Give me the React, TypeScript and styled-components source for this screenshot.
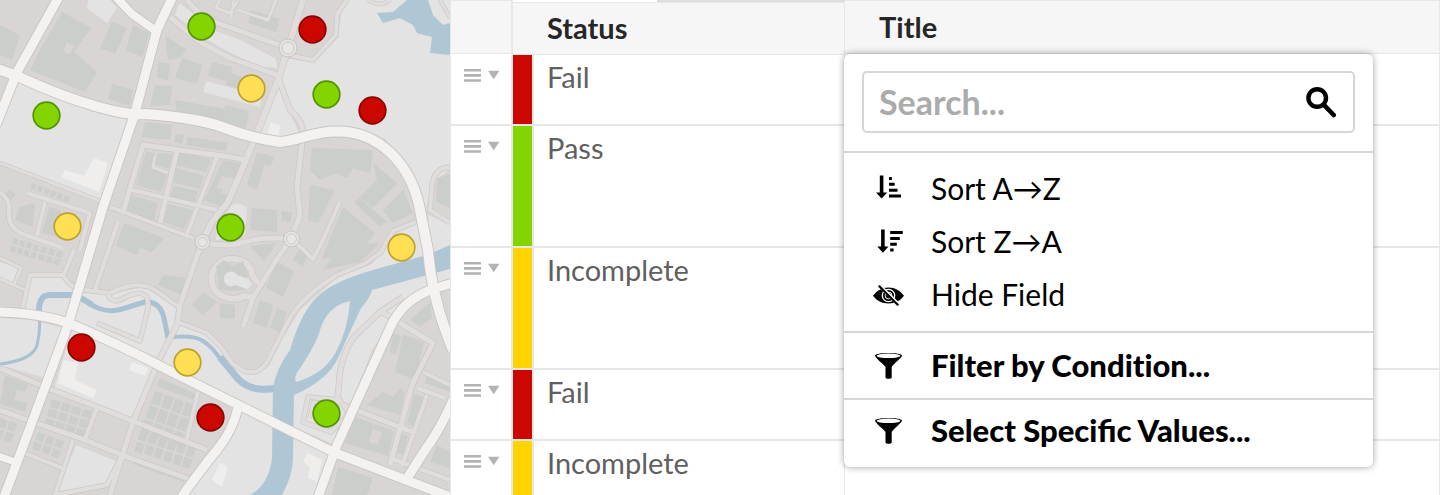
import React from "react";
import styled, { createGlobalStyle } from "styled-components";

const GlobalStyle = createGlobalStyle`
  * { box-sizing: border-box; }
  body { margin: 0; background: #fff; font-family: Lato, "Liberation Sans", sans-serif; }
`;

const RULE = "#e7e7e7";
const COLORS = {
  red: { fill: "#cc0700", ring: "#8a0400" },
  green: { fill: "#84d500", ring: "#549400" },
  yellow: { fill: "#ffe055", ring: "#bfa02c" },
};
type Tone = keyof typeof COLORS;

/* ---------- Page ---------- */

const Page = styled.main`
  display: flex;
  height: 100vh;
  overflow: hidden;
`;

const MapPane = styled.section`
  flex: 0 0 31.25%;
  min-width: 0;
  background: #d8d6d5;
  svg { display: block; width: 100%; height: 100%; }
`;

const TablePane = styled.section`
  flex: 1 1 0;
  min-width: 0;
`;

/* ---------- Table ---------- */

const Grid = styled.table`
  width: 100%;
  table-layout: fixed;
  border-collapse: separate;
  border-spacing: 0;
  border-right: 1px solid ${RULE};
`;

const Col = styled.col<{ $w?: number }>`
  width: ${(p) => (p.$w ? `${p.$w}px` : "auto")};
`;

const HeadCell = styled.th`
  position: relative;
  height: 55px;
  padding: 0;
  vertical-align: top;
  text-align: left;
`;

const HeadBox = styled.div<{ $tall?: boolean; $edge?: "left" | "right"; $pad?: number }>`
  display: flex;
  align-items: center;
  height: ${(p) => (p.$tall ? 53 : 54)}px;
  padding-left: ${(p) => p.$pad ?? 0}px;
  padding-bottom: ${(p) => (p.$tall ? 2 : 0)}px;
  background: #f6f6f6;
  border-top: 1px solid ${RULE};
  border-bottom: 1px solid ${RULE};
  ${(p) => p.$edge === "left" && `border-left: 1px solid ${RULE};`}
  ${(p) => p.$edge === "right" && `border-left: 1px solid ${RULE}; border-right: 2px solid ${RULE};`}
  color: #262626;
  font-size: 29px;
  line-height: 36px;
  font-weight: 700;
`;

const TabStrip = styled.div`
  display: flex;
  height: 2px;
  background: #dedede;
  &::before { content: ""; width: 144px; background: #fff; }
`;

const Row = styled.tr<{ $h: number }>`
  height: ${(p) => p.$h}px;
`;

const Cell = styled.td`
  padding: 0;
  vertical-align: top;
  border-bottom: 2px solid ${RULE};
`;

const HandleCell = styled(Cell)`
  border-left: 1px solid ${RULE};
  border-right: 2px solid ${RULE};
`;

const SwatchCell = styled(Cell)<{ $color: string }>`
  background: ${(p) => p.$color};
  background-clip: padding-box;
  border-right: 2px solid ${RULE};
`;

const StatusCell = styled(Cell)`
  padding: 3px 0 0 13px;
  color: #606060;
  font-size: 29px;
  line-height: 38px;
`;

const TitleCell = styled(Cell)`
  border-left: 1px solid ${RULE};
`;

const RowButton = styled.button`
  display: block;
  margin: 14px 0 0 13px;
  padding: 0;
  border: 0;
  background: none;
  svg { display: block; }
`;

/* ---------- Column menu ---------- */

const Menu = styled.div`
  position: absolute;
  top: 54px;
  left: 0;
  z-index: 2;
  width: 529px;
  padding-bottom: 5px;
  background: #fff;
  border-radius: 6px;
  box-shadow: 0 0 7px rgba(0, 0, 0, 0.38);
  font-weight: 400;
`;

const SearchArea = styled.div`
  padding: 17px 18px 18px;
`;

const SearchBox = styled.label`
  display: flex;
  align-items: center;
  height: 62px;
  padding: 0 16px 0 15px;
  border: 2px solid #d6d6d6;
  border-radius: 5px;
`;

const SearchInput = styled.input`
  flex: 1;
  min-width: 0;
  padding: 0;
  border: 0;
  outline: 0;
  background: none;
  font-family: inherit;
  font-size: 34px;
  line-height: 44px;
  font-weight: 700;
  color: #222;
  &::placeholder { color: #ababab; opacity: 1; }
`;

const MenuGroup = styled.div<{ $padded?: boolean }>`
  border-top: 2px solid #d6d6d6;
  padding: ${(p) => (p.$padded ? "9px 0 10px" : "0")};
`;

const MenuItem = styled.button<{ $strong?: boolean; $plain?: boolean; $h?: number }>`
  display: flex;
  align-items: center;
  gap: 27px;
  width: 100%;
  height: ${(p) => p.$h ?? 53}px;
  padding: 0 0 2px 28px;
  border: 0;
  background: none;
  color: #000;
  font-family: inherit;
  font-size: ${(p) => (p.$strong ? 31 : 30)}px;
  line-height: 40px;
  font-weight: ${(p) => (p.$strong ? 900 : 400)};
  font-variant-ligatures: ${(p) => (p.$plain ? "none" : "normal")};
  text-align: left;
  svg { flex: none; display: block; }
`;

/* ---------- Icons ---------- */

const RowHandleIcon = () => (
  <svg width="37" height="13" viewBox="0 0 37 13" fill="#b3b3b3" aria-hidden="true">
    <path d="M0 0h17v2.600H0zM0 5.100h17v2.600H0zM0 10.200h17v2.600H0zM24 1.800h11.400L29.700 10.200z" />
  </svg>
);

const SearchIcon = () => (
  <svg width="32" height="32" viewBox="0 0 32 32" fill="none" stroke="#000" strokeLinecap="round" aria-hidden="true">
    <circle cx="12.200" cy="12" r="8.800" strokeWidth="4.400" />
    <path d="M19.200 19.200l9.500 9.800" strokeWidth="4.600" />
  </svg>
);

const SortAscIcon = () => (
  <svg width="32" height="32" viewBox="0 0 32 32" aria-hidden="true">
    <path d="M7.800 3.500h3.600v17h3.800L9.600 26.500 4 20.500h3.800zM17 5h2.900v3H17zM17 10.800h5.700v3H17zM17 16.700h8.500v3H17zM17 22.500h12v3H17z" />
  </svg>
);

const SortDescIcon = () => (
  <svg width="32" height="32" viewBox="0 0 32 32" aria-hidden="true">
    <path d="M9.100 4.500h3.600v17h3.800L10.900 27.700 5.300 21.500h3.800zM18.200 6h12.600v3H18.200zM18.200 11.900h9.600v3h-9.600zM18.200 17.800h6.600v3h-6.600zM18.200 23.600h3.400v3h-3.400z" />
  </svg>
);

const HiddenIcon = () => (
  <svg width="32" height="32" viewBox="0 -1 32 32" aria-hidden="true">
    <path d="M1 16.800C5 11.500 10 8.500 16.500 8.500S28 11.500 32 16.800c-4 5.200-9 7.700-15.500 7.700S5 22 1 16.800z" />
    <circle cx="16.500" cy="16.500" r="6.200" fill="none" stroke="#fff" strokeWidth="1.300" />
    <circle cx="16.500" cy="16.500" r="3.400" fill="none" stroke="#fff" strokeWidth="1" />
    <path d="M8.500 7.500l18 18" stroke="#fff" strokeWidth="3.600" />
    <path d="M7.300 7.300l18.400 18.400" stroke="#000" strokeWidth="2.200" strokeLinecap="round" />
  </svg>
);

const FunnelIcon = () => (
  <svg width="32" height="32" viewBox="0 -1 32 32" aria-hidden="true">
    <path d="M3 5.500C3 2 30 2 30 5.500c0 2-8 8-10.300 11.500V27.500c0 1.700-6.200 1.700-6.200 0V17C11 13.500 3 8 3 5.500z" />
    <ellipse cx="16.500" cy="5.800" rx="11.900" ry="2.300" fill="#fff" />
  </svg>
);

/* ---------- Map ---------- */

const LAND = [
  "M18 83L60 98 128 117 103 200 0 161V128z",
  "M345 0L341 15 338 38 316 60 289 59 279 82 295 115 303 134 340 127 385 139 412 170 425 215 431 185 450 168V0z",
  "M278 85L258 137 280 143 301 136 288 110z",
  "M0 262L18 268 12 284 0 280z",
  "M30 278H62L82 292 110 295 144 287 178 308 176 326 158 358 68 321 22 313z",
  "M0 318L33 320 63 328 46 378 0 365z",
  "M72 330L156 368 135 420 54 388z",
  "M181 324L207 334 237 367 255 374 269 366 283 338 300 310 338 277 372 264 392 235 420 222 432 285 400 308 372 350 335 445 233 400 160 362z",
  "M428 215L450 224V284L434 288z",
  "M236 408L334 455 318 495H184L217 450z",
  "M76 445L118 462 105 484 57 492z",
  "M180 3L213 30 240 40 275 58 278 68 260 67 225 50 200 35 175 15z",
  "M88 0H110L117 8 107 23 87 8z",
  "M206 81L262 96 260 107 203 92z",
  "M232 205L237 203 247 207 245 235 216 240 218 225z",
];

const WHITE_BUILDINGS = [
  "M94 158L108 163 99 192 61 177 65 170 84 176z",
  "M63 360L78 363 75 380 97 390 93 398 58 383z",
  "M132 362L148 368 145 376 129 370z",
  "M220 463L228 467 222 487 212 480z",
  "M307 453L322 460 317 482 308 478 310 467 303 462z",
  "M270 123l10 2-1 11-11-2z",
];

const BUILDINGS = [
  "M0 25L20 35 12 60 0 55z",
  "M62 12L91 28 74 52 97 72 85 92 30 70 40 50z",
  "M112 22L127 28 115 54 100 48z",
  "M133 25L150 33 142 57 126 50z",
  "M112 84L133 90 130 106 108 99z",
  "M165 36L187 50 180 58 168 60z",
  "M158 62L170 64 168 80 157 78z",
  "M182 58L202 65 197 84 175 78z",
  "M212 62L232 67 230 82 208 76z",
  "M155 85L172 86 170 105 150 106z",
  "M175 100L232 110 230 122 177 112z",
  "M145 122L172 125 170 140 142 137z",
  "M176 134l8 1-2 9-8-2zM188 137l40 6-2 8-40-6z",
  "M228 72l18 7-3 11-17-5z",
  "M225 105l24 6-3 17-23-5z",
  "M252 10l28 9-4 13-28-9z",
  "M312 148L373 150 370 173 353 168 347 178 337 173 320 180 310 170z",
  "M257 152L275 157 270 166 264 165 257 190 247 185z",
  "M310 185L335 190 318 223 308 220z",
  "M373 163L397 183 373 208 360 197 377 180z",
  "M252 208L277 210 277 232 250 230z",
  "M282 211l10 1-1 10-10-1z",
  "M343 207L375 233 353 262 322 258z",
  "M354 202L360 198 387 222 380 227z",
  "M403 190L413 213 393 223 383 210z",
  "M250 246L277 243 264 261z",
  "M277 262L294 271 283 297 266 288z",
  "M260 300L273 305 267 328 253 323z",
  "M277 308L287 312 280 332 270 328z",
  "M220 303l15 2v14l-15-1z",
  "M345 245L380 243 360 262 322 270z",
  "M299 250l9 6-6 10-9-6z",
  "M124 223L164 238 152 252 140 248 137 255 116 246z",
  "M163 275L185 278 182 295 158 285z",
  "M203 292L217 302 203 315 192 305z",
  "M20 207L35 203 33 227 15 220z",
  "M49 207l12 4-1 12 12 4-4 12-26-6z",
  "M9 190l7 4-5 6-6-4z",
  "M5 375L28 384 25 392 17 390 14 400 27 403 25 412 0 404z",
  "M160 378L196 394 194 400 157 386z",
  "M135 458L186 476 184 482 133 464z",
  "M403 335L424 342 415 380 395 372z",
  "M393 333L401 336 396 354 390 352z",
  "M383 392L393 397 400 388 405 392 400 415 367 405z",
  "M354 417L374 424 369 442 377 445 382 432 373 430 375 424 394 431 388 456 345 443z",
  "M338 467L373 478 367 495H332z",
  "M430 302L432 318 420 327 410 320z",
  "M437 445L450 452V468L430 462z",
  "M427 376l23 9v7l-25-9z",
  "M414 394l10 3-8 30-9-3z",
  "M399 433l9 3-5 19-9-3z",
  "M437 178l13-4v34l-14-6z",
  "M146 152L155 153 150 168 167 174 162 192 136 185z",
  "M158 153L173 154 169 169 155 164z",
  "M180 152L211 159 206 172 176 165z",
  "M176 168L204 176 200 189 172 182z",
  "M174 186L198 191 195 203 170 197z",
  "M223 160L243 164 238 180 228 177 221 193 230 195 224 207 204 201z",
  "M131 195L158 203 154 222 125 212z",
  "M168 204L193 210 184 229 163 222z",
];

const COURTS = [
  "M66 42l8 4-4 8-6-2z",
  "M186 88l10 2-1 4-10-2z",
  "M222 176l7 2-5 12-7-2z",
];

const BLOCK_GRIDS = [
  { x: 52, y: 399, angle: 17, cols: 4, rows: 3, w: 9, h: 8, gap: 2 },
  { x: 38, y: 432, angle: 20, cols: 3, rows: 2, w: 8, h: 8, gap: 2 },
  { x: 0, y: 418, angle: 18, cols: 2, rows: 2, w: 8, h: 9, gap: 2 },
  { x: 155, y: 391, angle: 20, cols: 4, rows: 3, w: 9, h: 13, gap: 2 },
  { x: 141, y: 430, angle: 18, cols: 6, rows: 2, w: 8, h: 10, gap: 2 },
  { x: 32, y: 183, angle: 20, cols: 6, rows: 1, w: 5, h: 6, gap: 2 },
  { x: 14, y: 238, angle: 17, cols: 4, rows: 2, w: 5, h: 6, gap: 2 },
  { x: 42, y: 246, angle: 17, cols: 3, rows: 2, w: 6, h: 6, gap: 2 },
];

type Road = { d: string; w: number };

const LANES: Road[] = [
  { d: "M123 212L143 145 230 157 247 160", w: 5 },
  { d: "M132 190L217 210", w: 4 },
  { d: "M177 151L160 223", w: 5 },
  { d: "M217 157L187 234", w: 4 },
  { d: "M110 207L193 238", w: 4 },
  { d: "M155 157l-2 10 15 6", w: 3 },
  { d: "M0 163L100 201", w: 3 },
  { d: "M0 192Q11 200 9 212T20 233L63 248", w: 4 },
  { d: "M27 193L90 213 80 250", w: 4 },
  { d: "M45 202L37 236", w: 4 },
  { d: "M118 222L95 290", w: 4 },
  { d: "M202 242L212 222 228 202 243 167 257 133 278 80 288 48 303 0", w: 6 },
  { d: "M170 17L200 42 230 58 277 75", w: 5 },
  { d: "M187 0L200 15 220 24 288 48", w: 5 },
  { d: "M220 0l-4 8 14 5 8-12M234 0l-3 17M238 10l30 10 8-20", w: 3 },
  { d: "M288 55L313 60 336 35 337 14 347 0", w: 4 },
  { d: "M278 77L290 110Q304 122 303 135L300 160 297 187 300 215 291 239", w: 5 },
  { d: "M202 242Q225 248 245 242T291 239", w: 5 },
  { d: "M291 239L275 262 253 298 243 327", w: 5 },
  { d: "M293 240L313 259 322 242 340 202", w: 4 },
  { d: "M426 218L393 231 381 252 366 263 337 275Q300 298 289 320L267 362Q254 382 232 363L220 346 207 333 178 322", w: 4 },
  { d: "M202 242L180 305 177 325 160 358 133 422 110 495", w: 5 },
  { d: "M22 312L30 275 63 275Q72 290 85 290L110 293Q140 278 158 292L180 308", w: 4 },
  { d: "M64 274L74 250", w: 4 },
  { d: "M108 295Q112 304 122 299 150 284 148 308L140 341 97 323", w: 4 },
  { d: "M0 258L21 268 14 285 0 279", w: 3 },
  { d: "M14 285l11 5", w: 3 },
  { d: "M0 368L47 388 100 408 135 422 207 450", w: 5 },
  { d: "M0 410L33 422 80 438 130 458 192 480", w: 5 },
  { d: "M97 408L84 442", w: 4 },
  { d: "M73 440L55 495 107 485 121 457", w: 4 },
  { d: "M22 452l40 16M198 392L186 443", w: 4 },
  { d: "M337 405L340 372Q345 345 358 333L380 312 403 297", w: 5 },
  { d: "M382 312L433 343 412 385 390 465", w: 5 },
  { d: "M343 405L387 422 415 433", w: 5 },
  { d: "M423 372L450 385M417 388L445 398M427 395L402 466M390 458L450 480", w: 4 },
  { d: "M303 422L308 397 340 400 349 414 331 432z", w: 4 },
  { d: "M310 418L313 402 335 405", w: 3 },
  { d: "M450 167Q433 168 432 187L430 210 450 223", w: 4 },
  { d: "M368 0q12 8 22 0M440 0l10 18", w: 3 },
  { d: "M254 297L244 296Q236 301 224 297A21 20 0 1 1 251 269Q252 279 259 283", w: 6 },
];

const STREETS: Road[] = [
  { d: "M115 -4L132 14 156 31", w: 8 },
  { d: "M60 -5L17 72 -4 125", w: 9 },
  { d: "M-2 456L15 462", w: 7 },
  { d: "M238 408Q232 432 217 450T180 499", w: 9 },
  { d: "M453 400Q440 430 425 450L406 480", w: 9 },
  { d: "M453 283L433 289Q402 300 390 328L337 445 317 500", w: 9 },
  { d: "M173 -4L157 30 135 113 103 207 68 325 47 382 3 500", w: 9 },
  { d: "M-2 69L17 76Q60 96 95 106T145 114Q200 118 225 128T280 142C300 140 315 131 337 131.500 380 131 410 165 419 205L428 250Q432 300 453 350", w: 10 },
  { d: "M-2 312Q40 313 68 323 110 340 170 371L333 452 453 498", w: 9 },
];

const MARKERS: { x: number; y: number; tone: Tone }[] = [
  { x: 201.500, y: 26.500, tone: "green" },
  { x: 312.500, y: 29.500, tone: "red" },
  { x: 251.500, y: 88.500, tone: "yellow" },
  { x: 326.500, y: 94.500, tone: "green" },
  { x: 372.500, y: 110.500, tone: "red" },
  { x: 46.500, y: 115.500, tone: "green" },
  { x: 67.500, y: 226.500, tone: "yellow" },
  { x: 230.500, y: 227.500, tone: "green" },
  { x: 401.500, y: 247.500, tone: "yellow" },
  { x: 81.500, y: 347.500, tone: "red" },
  { x: 187.500, y: 362.500, tone: "yellow" },
  { x: 210.500, y: 417.500, tone: "red" },
  { x: 326.500, y: 413.500, tone: "green" },
];

const Roads = ({ list, fill, edge, rim }: { list: Road[]; fill: string; edge: string; rim: number }) => (
  <g fill="none" strokeLinejoin="round">
    {list.map((r) => (
      <path key={`e${r.d}`} d={r.d} stroke={edge} strokeWidth={r.w + rim} />
    ))}
    {list.map((r) => (
      <path key={r.d} d={r.d} stroke={fill} strokeWidth={r.w} />
    ))}
  </g>
);

const CityMap = () => (
  <svg viewBox="0 0 450 495" preserveAspectRatio="xMinYMin slice" role="img" aria-label="City map with status markers">
    <path fill="#d8d5d4" d="M0 0h450v495H0z" />
    <g fill="#e2e3e2">{LAND.map((d) => <path key={d} d={d} />)}</g>
    <g fill="#cccecb">
      {BUILDINGS.map((d) => <path key={d} d={d} />)}
      {BLOCK_GRIDS.map((b) => (
        <g key={`${b.x}-${b.y}`} transform={`translate(${b.x} ${b.y}) rotate(${b.angle})`}>
          {Array.from({ length: b.cols * b.rows }, (_, i) => (
            <rect
              key={i}
              x={(i % b.cols) * (b.w + b.gap)}
              y={Math.floor(i / b.cols) * (b.h + b.gap)}
              width={b.w}
              height={b.h}
            />
          ))}
        </g>
      ))}
    </g>
    <g fill="#d8d5d4">{COURTS.map((d) => <path key={d} d={d} />)}</g>
    <path
      fill="#afc6d5"
      d="M377 13L393 12 407 0H428L433 15 443 25 450 23V55L430 53 432 37 417 33 413 25 400 18 383 23z"
    />
    <g fill="none" stroke="#a9c1d2" strokeLinejoin="round">
      <path strokeWidth="3" d="M0 364Q33 360 37 345T39 312" />
      <path strokeWidth="6" d="M39 314Q38 295 50 295H73Q84 299 92 305" />
      <path strokeWidth="5" d="M90 304Q106 314 122 309T145 302Q160 301 164 318L168 338" />
      <path strokeWidth="4" d="M168 338Q192 334 203 341T222 362" />
      <path strokeWidth="7" d="M220 357L238 379Q252 393 277 388" />
    </g>
    <path
      fill="#afc6d5"
      fillRule="evenodd"
      d="M450 245L427 255 380 268Q335 280 318 296T290 350Q275 370 273 390L272 458Q269 485 250 495H282Q293 475 293 457L294 395Q328 380 338 358T361 308Q370 298 372 290L450 269zM350 301Q348 330 336 352T296 382Q293 376 301 367 317 342 320 330 327 306 350 301z"
    />
    <Roads list={LANES} fill="#e0dddc" edge="#cbc9c7" rim={1.4} />
    <g fill="#e4e3e2" stroke="#c8c6c4">
      <circle cx="202.500" cy="242" r="7.500" />
      <circle cx="288" cy="48" r="9" />
      <circle cx="291.500" cy="239" r="8" />
    </g>
    <g fill="#e6e6e5" stroke="#cdcbca">
      <circle cx="202.500" cy="242" r="4.500" />
      <circle cx="288" cy="48" r="6" />
      <circle cx="291.500" cy="239" r="5" />
    </g>
    <path fill="#cccecb" d="M216 266l8-6 9 6 10-5 5 13-4 16-14 1-11-2z" />
    <path d="M224 279a7 7 0 0 1 13-4l12 4 3 6-5 4-12-4a7 7 0 0 1-11-6z" fill="#e2e3e2" />
    <g fill="#f0eeed">{WHITE_BUILDINGS.map((d) => <path key={d} d={d} />)}</g>
    <Roads list={STREETS} fill="#f4f2f1" edge="#c9c5c1" rim={1.8} />
    {MARKERS.map((m) => (
      <circle
        key={`${m.x}-${m.y}`}
        cx={m.x}
        cy={m.y}
        r="13.300"
        fill={COLORS[m.tone].fill}
        stroke={COLORS[m.tone].ring}
        strokeWidth="1.700"
      />
    ))}
  </svg>
);

/* ---------- Data ---------- */

const ROWS = [
  { status: "Fail", color: "#cc0700", height: 71 },
  { status: "Pass", color: "#84d500", height: 122 },
  { status: "Incomplete", color: "#ffd400", height: 122 },
  { status: "Fail", color: "#cc0700", height: 71 },
  { status: "Incomplete", color: "#ffd400", height: 71 },
];

const ColumnMenu = () => (
  <Menu role="group" aria-label="Title column options">
    <SearchArea>
      <SearchBox>
        <SearchInput type="text" placeholder="Search..." aria-label="Search" />
        <SearchIcon />
      </SearchBox>
    </SearchArea>
    <MenuGroup $padded>
      <MenuItem type="button"><SortAscIcon />Sort A→Z</MenuItem>
      <MenuItem type="button"><SortDescIcon />Sort Z→A</MenuItem>
      <MenuItem type="button"><HiddenIcon />Hide Field</MenuItem>
    </MenuGroup>
    <MenuGroup>
      <MenuItem type="button" $strong $plain $h={65}><FunnelIcon />Filter by Condition...</MenuItem>
    </MenuGroup>
    <MenuGroup>
      <MenuItem type="button" $strong $h={62}><FunnelIcon />Select Specific Values...</MenuItem>
    </MenuGroup>
  </Menu>
);

export default function App() {
  return (
    <>
      <GlobalStyle />
      <Page>
        <MapPane><CityMap /></MapPane>
        <TablePane>
          <Grid>
            <colgroup>
              <Col $w={63} />
              <Col $w={21} />
              <Col $w={310} />
              <Col />
            </colgroup>
            <thead>
              <tr>
                <HeadCell><HeadBox $edge="right" /></HeadCell>
                <HeadCell colSpan={2} scope="col">
                  <TabStrip />
                  <HeadBox $tall $pad={34}>Status</HeadBox>
                </HeadCell>
                <HeadCell scope="col">
                  <HeadBox $edge="left" $pad={34}>Title</HeadBox>
                  <ColumnMenu />
                </HeadCell>
              </tr>
            </thead>
            <tbody>
              {ROWS.map((r, i) => (
                <Row key={i} $h={r.height}>
                  <HandleCell>
                    <RowButton type="button" aria-label="Row actions"><RowHandleIcon /></RowButton>
                  </HandleCell>
                  <SwatchCell $color={r.color} />
                  <StatusCell>{r.status}</StatusCell>
                  <TitleCell />
                </Row>
              ))}
            </tbody>
          </Grid>
        </TablePane>
      </Page>
    </>
  );
}
